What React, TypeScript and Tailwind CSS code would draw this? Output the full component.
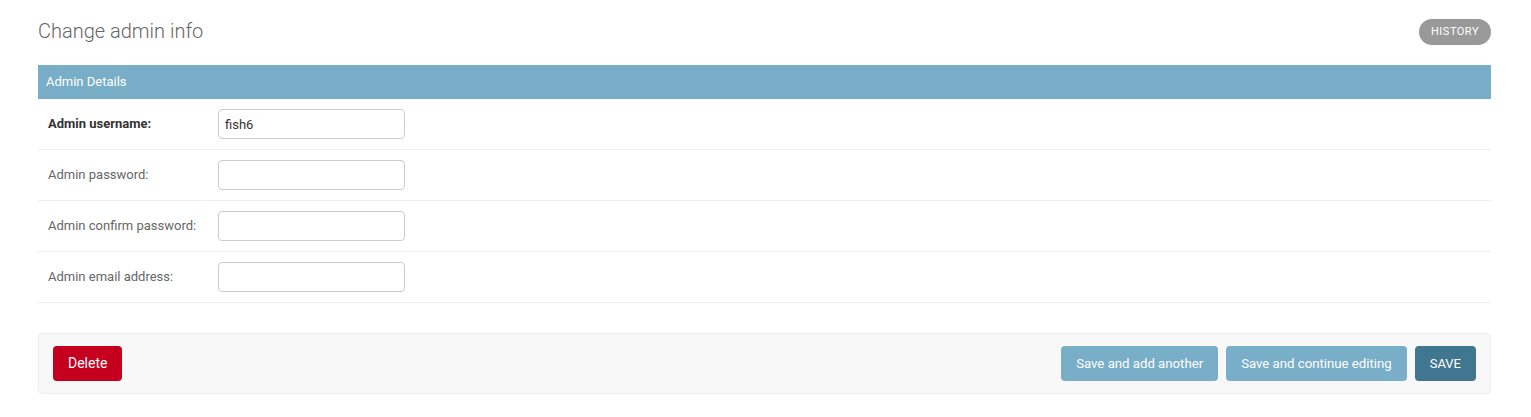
import React from "react";

const rows = [
  { label: "Admin username:", value: "fish6", required: true },
  { label: "Admin password:", value: "", required: false },
  { label: "Admin confirm password:", value: "", required: false },
  { label: "Admin email address:", value: "", required: false },
];

export default function App() {
  return (
    <div
      className="min-h-[417px] bg-white pl-[38px] pr-[40px] pt-[20px] text-[14px] text-[#333]"
      style={{ fontFamily: "Roboto, 'Liberation Sans', sans-serif" }}
    >
      <div className="flex items-start justify-between">
        <h1 className="m-0 h-[23px] text-[20px] font-light leading-[23px] text-[#666]">Change admin info</h1>
        <a className="-mt-[2px] translate-y-[1px] rounded-[15px] bg-[#999] px-[12px] text-[11px] uppercase leading-[26px] tracking-[0.5px] text-white">
          History
        </a>
      </div>
      <div className="mt-[21px]">
        <h2 className="bg-[#79aec8] px-[8px] text-[13px] font-normal leading-[34px] text-white">Admin Details</h2>
        {rows.map((r) => (
          <div key={r.label} className="flex items-center border-b border-[#eee] p-[10px]">
            <label
              className={
                "w-[170px] text-[13px] " +
                (r.required ? "font-bold text-[#333]" : "font-normal text-[#666]")
              }
            >
              {r.label}
            </label>
            <input
              readOnly
              value={r.value}
              className="h-[30px] w-[187px] rounded-[4px] border border-[#ccc] px-[6px] text-[13px] text-[#333] outline-none"
            />
          </div>
        ))}
      </div>
      <div className="mt-[30px] flex items-center justify-between rounded-[4px] border border-[#eee] bg-[#f8f8f8] px-[14px] py-[12px]">
        <a className="rounded-[4px] bg-[#c4001e] px-[15px] text-[14px] leading-[35px] text-white">Delete</a>
        <div className="flex gap-[8px]">
          <button className="h-[35px] rounded-[4px] bg-[#79aec8] px-[15px] text-[13.2px] text-white">Save and add another</button>
          <button className="h-[35px] rounded-[4px] bg-[#79aec8] px-[15px] text-[13.2px] text-white">Save and continue editing</button>
          <button className="h-[35px] rounded-[4px] bg-[#417690] px-[15px] text-[13px] text-white">SAVE</button>
        </div>
      </div>
    </div>
  );
}
